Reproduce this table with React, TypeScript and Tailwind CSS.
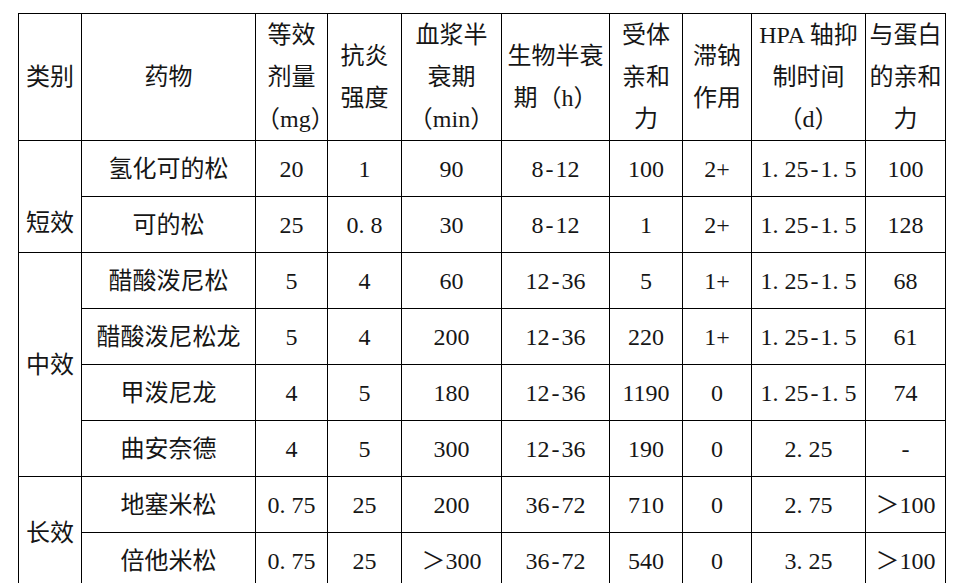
import React from "react";

const cols = [63, 174, 72, 74, 100, 108, 73, 69, 114, 80];

type Row = { group?: string; span?: number; groupClass?: string; cells: string[] };

const rows: Row[] = [
  { group: "短效", span: 2, groupClass: "pt-[52px]", cells: ["氢化可的松", "20", "1", "90", "8-12", "100", "2+", "1.25-1.5", "100"] },
  { cells: ["可的松", "25", "0.8", "30", "8-12", "1", "2+", "1.25-1.5", "128"] },
  { group: "中效", span: 4, cells: ["醋酸泼尼松", "5", "4", "60", "12-36", "5", "1+", "1.25-1.5", "68"] },
  { cells: ["醋酸泼尼松龙", "5", "4", "200", "12-36", "220", "1+", "1.25-1.5", "61"] },
  { cells: ["甲泼尼龙", "4", "5", "180", "12-36", "1190", "0", "1.25-1.5", "74"] },
  { cells: ["曲安奈德", "4", "5", "300", "12-36", "190", "0", "2.25", "-"] },
  { group: "长效", span: 2, cells: ["地塞米松", "0.75", "25", "200", "36-72", "710", "0", "2.75", "＞100"] },
  { cells: ["倍他米松", "0.75", "25", "＞300", "36-72", "540", "0", "3.25", "＞100"] },
];

const headers: string[][] = [
  ["类别"],
  ["药物"],
  ["等效", "剂量", "（mg）"],
  ["抗炎", "强度"],
  ["血浆半", "衰期", "（min）"],
  ["生物半衰", "期（h）"],
  ["受体", "亲和", "力"],
  ["滞钠", "作用"],
  ["HPA 轴抑", "制时间", "（d）"],
  ["与蛋白", "的亲和", "力"],
];

const cell = "border border-black text-center align-middle p-0";

// the dots and dashes in the source are wide, so give them some room
const Num = ({ text }: { text: string }) => {
  const parts = text.split(/([.\-])/);
  return (
    <>
      {parts.map((p, i) =>
        p === "." ? (
          <span key={i} className="mr-[6px]">.</span>
        ) : p === "-" ? (
          <span key={i} className="mx-[2px]">-</span>
        ) : (
          <React.Fragment key={i}>{p}</React.Fragment>
        )
      )}
    </>
  );
};

export default function App() {
  return (
    <div
      className="w-[974px] h-[583px] overflow-hidden bg-white pl-[18px] pt-[13px] text-[#161616] text-[24px]"
      style={{ fontFamily: '"Liberation Serif", "Noto Sans CJK SC", serif' }}
    >
      <table className="table-fixed border-collapse w-[928px]">
        <colgroup>
          {cols.map((w, i) => (
            <col key={i} style={{ width: w }} />
          ))}
        </colgroup>
        <thead>
          <tr className="h-[127px]">
            {headers.map((lines, i) => (
              <th key={i} className={`${cell} font-normal leading-[42px]`}>
                {lines.map((l, j) => (
                  <div key={j} className="whitespace-nowrap">{l}</div>
                ))}
              </th>
            ))}
          </tr>
        </thead>
        <tbody>
          {rows.map((r, i) => (
            <tr key={i} className="h-[56px]">
              {r.group && (
                <td rowSpan={r.span} className={`${cell} ${r.groupClass ?? ""}`}>
                  {r.group}
                </td>
              )}
              {r.cells.map((c, j) => (
                <td key={j} className={`${cell} whitespace-nowrap`}>
                  {j === 0 ? c : <Num text={c} />}
                </td>
              ))}
            </tr>
          ))}
        </tbody>
      </table>
    </div>
  );
}
